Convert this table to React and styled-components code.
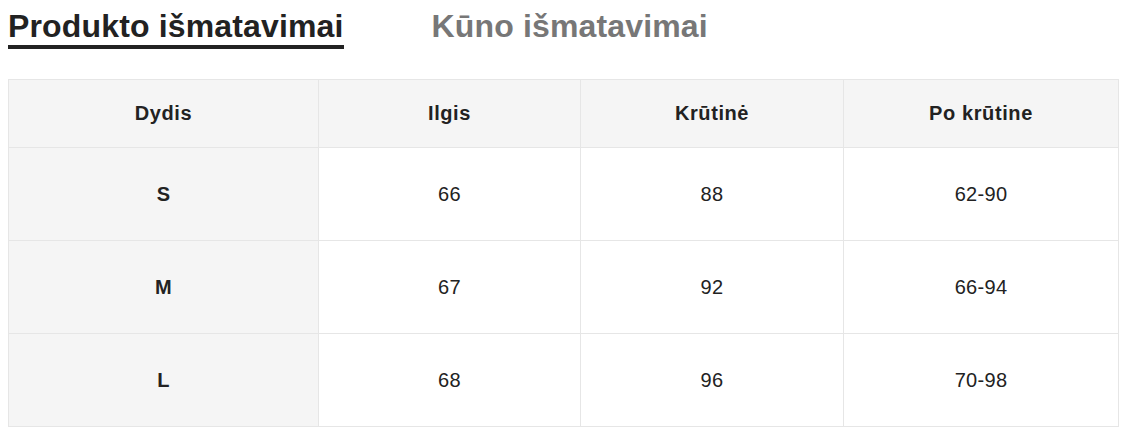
import styled, { createGlobalStyle } from "styled-components";

const GlobalStyle = createGlobalStyle`
  html {
    overflow: hidden;
  }
  body {
    margin: 8px 0 0 8px;
    background: #fff;
    font-family: "Liberation Sans", Arial, sans-serif;
    color: #222;
  }
`;

const Tabs = styled.div`
  display: flex;
  align-items: flex-start;
  gap: 88px;
  margin-bottom: 30px;
`;

const Tab = styled.div`
  font-size: 32px;
  font-weight: 700;
  line-height: normal;
  letter-spacing: 0.15px;
  color: ${(p) => (p.$active ? "#222" : "#777")};
  border-bottom: 4px solid ${(p) => (p.$active ? "#222" : "transparent")};
  cursor: pointer;
`;

const Table = styled.table`
  width: 1110px;
  border-collapse: collapse;
  table-layout: fixed;
  font-size: 20px;
`;

const Th = styled.th`
  height: 67px;
  padding: 0;
  background: #f5f5f5;
  border: 1px solid #e6e6e6;
  font-weight: 700;
  letter-spacing: 0.6px;
  text-align: center;
  vertical-align: middle;
`;

const Td = styled.td`
  height: 92px;
  padding: 0;
  border: 1px solid #e6e6e6;
  text-align: center;
  vertical-align: middle;
  letter-spacing: 0.3px;
  background: ${(p) => (p.$head ? "#f5f5f5" : "#fff")};
  font-weight: ${(p) => (p.$head ? 700 : 400)};
`;

const headers = ["Dydis", "Ilgis", "Krūtinė", "Po krūtine"];
const widths = [310, 262, 263, 275];
const rows = [
  ["S", "66", "88", "62-90"],
  ["M", "67", "92", "66-94"],
  ["L", "68", "96", "70-98"],
];

export default function App() {
  return (
    <>
      <GlobalStyle />
      <Tabs>
        <Tab $active>Produkto išmatavimai</Tab>
        <Tab>Kūno išmatavimai</Tab>
      </Tabs>
      <Table>
        <colgroup>
          {widths.map((w, i) => (
            <col key={i} style={{ width: w }} />
          ))}
        </colgroup>
        <thead>
          <tr>
            {headers.map((h) => (
              <Th key={h}>{h}</Th>
            ))}
          </tr>
        </thead>
        <tbody>
          {rows.map((r) => (
            <tr key={r[0]}>
              {r.map((c, i) => (
                <Td key={i} $head={i === 0}>
                  {c}
                </Td>
              ))}
            </tr>
          ))}
        </tbody>
      </Table>
    </>
  );
}
